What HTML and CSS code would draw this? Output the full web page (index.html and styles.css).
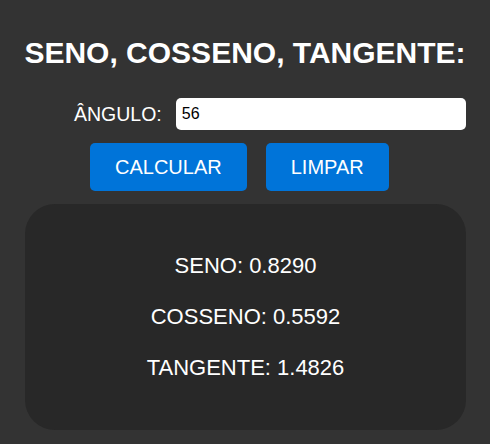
FILE: index.html
```html
<!DOCTYPE html>
<html lang="pt">
<head>
<meta charset="utf-8">
<title>Seno, Cosseno, Tangente</title>
<link rel="stylesheet" href="styles.css">
</head>
<body>
<main class="app">
  <h1 class="title">SENO, COSSENO, TANGENTE:</h1>
  <div class="field">
    <label class="label" for="angulo">ÂNGULO:</label>
    <input class="input" id="angulo" type="text" value="56">
  </div>
  <div class="actions">
    <button class="btn" type="button">CALCULAR</button>
    <button class="btn" type="button">LIMPAR</button>
  </div>
  <section class="result">
    <p class="line">SENO: 0.8290</p>
    <p class="line">COSSENO: 0.5592</p>
    <p class="line">TANGENTE: 1.4826</p>
  </section>
</main>
</body>
</html>
```
FILE: styles.css
```css
html, body {
  margin: 0;
  padding: 0;
  background: #333333;
}
body {
  font-family: "Liberation Sans", Arial, sans-serif;
  color: #ffffff;
}
.app {
  display: flex;
  flex-direction: column;
  padding-top: 35px;
}
.title {
  margin: 0;
  font-size: 30px;
  line-height: 35px;
  font-weight: bold;
  text-align: center;
}
.field {
  display: flex;
  align-items: center;
  margin-top: 28px;
  padding-left: 74px;
}
.label {
  font-size: 19.5px;
  line-height: 22px;
  margin-right: 14px;
}
.input {
  width: 290px;
  height: 32px;
  box-sizing: border-box;
  border: none;
  border-radius: 5px;
  padding: 0 6px;
  font-family: "Liberation Sans", Arial, sans-serif;
  font-size: 16px;
  color: #000;
  background: #fff;
  outline: none;
}
.actions {
  display: flex;
  gap: 19px;
  margin-top: 13px;
  padding-left: 90px;
}
.btn {
  height: 48px;
  padding: 0 25px;
  border: none;
  border-radius: 5px;
  background: #0074d9;
  color: #fff;
  font-family: "Liberation Sans", Arial, sans-serif;
  font-size: 20px;
  line-height: 23px;
}
.result {
  margin: 13px 24px 0 25px;
  padding: 49px 0 50px;
  background: #282828;
  border-radius: 30px;
  display: flex;
  flex-direction: column;
  gap: 26px;
  align-items: center;
}
.line {
  margin: 0;
  font-size: 22px;
  line-height: 25px;
}
```
